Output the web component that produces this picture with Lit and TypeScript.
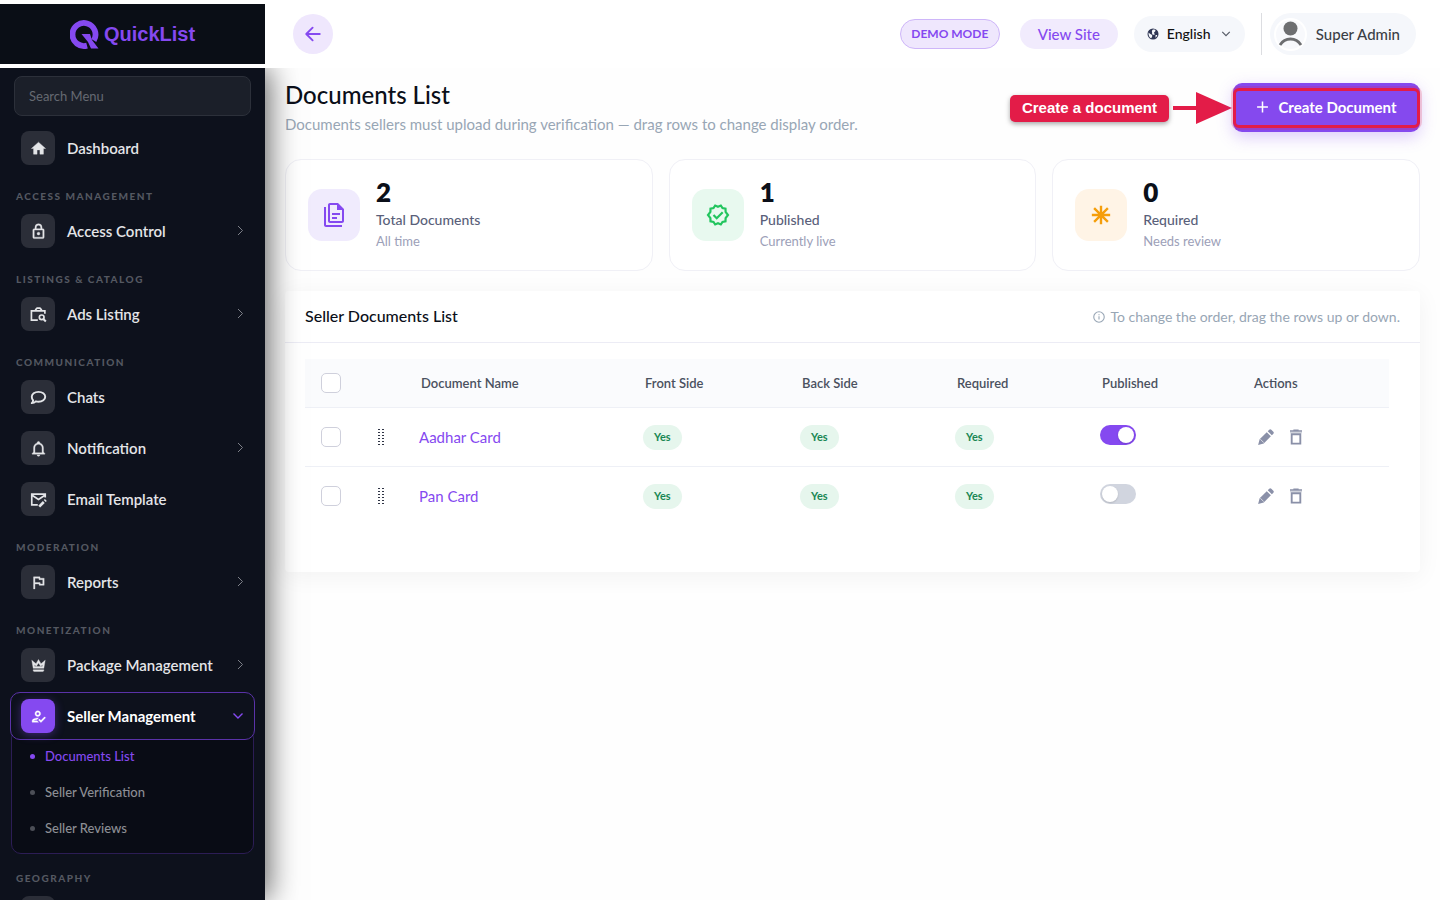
import { LitElement, html, svg, css, nothing } from "lit";
import { customElement, state } from "lit/decorators.js";
import { classMap } from "lit/directives/class-map.js";

const ICONS = {
  home: svg`<path fill="currentColor" d="M10 20v-6h4v6h5v-8h3L12 3 2 12h3v8z"/>`,
  lock: svg`<path fill="currentColor" d="M12,17C10.89,17 10,16.1 10,15C10,13.89 10.89,13 12,13A2,2 0 0,1 14,15A2,2 0 0,1 12,17M18,20V10H6V20H18M18,8A2,2 0 0,1 20,10V20A2,2 0 0,1 18,22H6C4.89,22 4,21.1 4,20V10C4,8.89 4.89,8 6,8H7V6A5,5 0 0,1 12,1A5,5 0 0,1 17,6V8H18M12,3A3,3 0 0,0 9,6V8H15V6A3,3 0 0,0 12,3Z"/>`,
  briefcase: svg`<g fill="none" stroke="currentColor" stroke-width="2.400"><path d="M11 20H2V7h19v4M8 7V5l2-2h4l2 2v2"/><circle cx="16.500" cy="16" r="3.300"/><path stroke-width="2.800" d="M18.800 18.300l3.600 3.600"/></g>`,
  chat: svg`<path fill="none" stroke="currentColor" stroke-width="2.700" stroke-linejoin="round" d="M12 4c5.500 0 9.500 3.100 9.500 7s-4 7-9.500 7c-1.300 0-2.600-.2-3.700-.6C6.600 19.200 4.900 20 2.500 20c1.300-1.300 1.900-2.600 2-3.800C3.200 14.900 2.500 13 2.500 11c0-3.900 4-7 9.500-7z"/>`,
  bell: svg`<path fill="currentColor" d="M10 21H14C14 22.100 13.100 23 12 23S10 22.100 10 21M21 19V20H3V19L5 17V11C5 7.900 7 5.200 10 4.300V4C10 2.900 10.900 2 12 2S14 2.900 14 4V4.300C17 5.200 19 7.900 19 11V17L21 19M17 11C17 8.200 14.800 6 12 6S7 8.200 7 11V18H17V11Z"/>`,
  mail: svg`<g fill="none" stroke="currentColor" stroke-width="2.400"><path d="M11 19.500H2.500V4.500h19V9M3 6l9 6 9-6"/><path stroke-width="3.800" d="M13 22l6.500-6.500M20.800 14.200l1.600-1.600"/></g>`,
  flag: svg`<path fill="currentColor" d="M12.360 6l.4 2H18v6h-3.360l-.4-2H7V6h5.360M14 4H5v17h2v-7h5.600l.4 2h7V6h-5.600L14 4z"/>`,
  crown: svg`<path fill="currentColor" d="M12 8.500L15 13.200L18 11L17.300 13.500H6.700L6 11L9 13.200L12 8.500M12 3.500L8.500 9.500L2.500 4.500L4.500 16H19.500L21.500 4.500L15.500 9.500L12 3.500M19.500 18H4.500V19C4.500 19.600 5.400 20.500 6 20.500H18C18.600 20.500 19.500 19.600 19.500 19V18Z"/>`,
  seller: svg`<path fill="currentColor" d="M11 12c2.210 0 4-1.790 4-4s-1.790-4-4-4-4 1.790-4 4 1.790 4 4 4zm0-6c1.100 0 2 .9 2 2s-.9 2-2 2-2-.9-2-2 .9-2 2-2zM5 18c.2-.63 2.570-1.680 4.960-1.940l2.040-2c-.39-.04-.68-.06-1-.06-2.670 0-8 1.340-8 4v2h9l-2-2H5zm15.600-5.500l-5.130 5.170-2.070-2.080L12 17l3.470 3.500L22 13.910z"/>`,
  map: svg`<path fill="none" stroke="currentColor" stroke-width="2" d="M3 5l6-2 6 2 6-2v16l-6 2-6-2-6 2zM9 3v16M15 5v16"/>`,
  files: svg`<path fill="currentColor" d="M16 0H8C6.900 0 6 .9 6 2V18C6 19.100 6.900 20 8 20H20C21.100 20 22 19.100 22 18V6L16 0M20 18H8V2H15V7H20V18M4 4V22H20V24H4C2.900 24 2 23.100 2 22V4H4M10 10V12H18V10H10M10 14V16H15V14H10Z"/>`,
  verified: svg`<g fill="none" stroke="currentColor" stroke-width="2.200"><path d="M12 3.700l2.800-1.200 1.700 2.600 3 .6.100 3.100L22 12l-2.400 3.200-.1 3.100-3 .6-1.700 2.600L12 20.300l-2.800 1.200-1.700-2.600-3-.6-.1-3.100L2 12l2.400-3.200.1-3.100 3-.6 1.700-2.600z"/><path d="M7.500 12l3.200 3.200 6-6"/></g>`,
  asterisk: svg`<path fill="none" stroke="currentColor" stroke-width="2.600" d="M12 2v20M2 12h20M4.500 4.500l15 15M19.500 4.500l-15 15"/>`,
  pencil: svg`<path fill="currentColor" d="M1.500 22.500l2-7.500L13 5.500l5.500 5.500-9.500 9.500zM14.300 4.200l2-2q1.400-1.200 2.800 0l2.700 2.700q1.200 1.400 0 2.800l-2 2z"/><path fill="none" stroke="#fff" stroke-width=".9" d="M4.500 15l4.500 4.500"/>`,
  trash: svg`<path fill="currentColor" d="M5 22h14V7H5zM7.500 9.500h9v10h-9zM15.500 2h-7v1H4v2h16V3h-4.500z"/><path fill="currentColor" opacity=".4" d="M4 5h16v2H4z"/>`,
  arrowLeft: svg`<path fill="none" stroke="currentColor" stroke-width="2.500" stroke-linecap="round" stroke-linejoin="round" d="M21 12H3.500M11.500 3.500L3 12l8.500 8.500"/>`,
  right: svg`<path fill="none" stroke="currentColor" stroke-width="2" d="M8 2l9 9-9 9"/>`,
  down: svg`<path fill="none" stroke="currentColor" stroke-width="2.800" d="M3 7l9 9 9-9"/>`,
  plus: svg`<path fill="none" stroke="currentColor" stroke-width="2.800" d="M12 1v20M2 11h20"/>`,
  info: svg`<circle cx="12" cy="12" r="10.500" fill="none" stroke="currentColor" stroke-width="2.200"/><path stroke="currentColor" stroke-width="2.200" d="M12 10.500V17M12 6.500v2"/>`,
  globe: svg`<circle cx="12" cy="12" r="11" fill="currentColor"/><path fill="#f5f7fb" d="M12 3c3-.4 5 .8 5 2.500S14.500 8 14 9.500s2 1.500 1.500 3-3 1.500-4.500.5-.5-3.500-1-5S10 4 12 3zM3 9c1.500 1 3 2.500 4.500 3.500S11 14 10.500 16 9 20 8 20.500C5 19 2.500 15 3 9zM17 14.500c1.500-.5 3-.5 3.500.5-.6 2-2 3.500-3.500 4.300z"/>`,
};
type IconName = keyof typeof ICONS;

const icon = (name: IconName, cls: string) =>
  html`<svg class=${cls} viewBox="0 0 24 24" aria-hidden="true">${ICONS[name]}</svg>`;

interface NavItem { label: string; icon: IconName; expandable?: boolean; active?: boolean; children?: string[]; }
interface NavGroup { title?: string; items: NavItem[]; }

const NAV: NavGroup[] = [
  { items: [{ label: "Dashboard", icon: "home" }] },
  { title: "Access Management", items: [{ label: "Access Control", icon: "lock", expandable: true }] },
  { title: "Listings & Catalog", items: [{ label: "Ads Listing", icon: "briefcase", expandable: true }] },
  { title: "Communication", items: [
    { label: "Chats", icon: "chat" },
    { label: "Notification", icon: "bell", expandable: true },
    { label: "Email Template", icon: "mail" },
  ] },
  { title: "Moderation", items: [{ label: "Reports", icon: "flag", expandable: true }] },
  { title: "Monetization", items: [
    { label: "Package Management", icon: "crown", expandable: true },
    { label: "Seller Management", icon: "seller", expandable: true, active: true,
      children: ["Documents List", "Seller Verification", "Seller Reviews"] },
  ] },
  { title: "Geography", items: [{ label: "Places", icon: "map", expandable: true }] },
];

@customElement("side-nav")
export class SideNav extends LitElement {
  static styles = css`
    :host { display: block; background: #0d111c; color: #e4e5e8; padding: 8px 10px 0; }
    .search { box-sizing: border-box; display: block; width: calc(100% - 8px); height: 40px; margin: 0 4px 8px;
      padding: 0 14px; border: 1px solid #2c303a; border-radius: 8px; background: #1b1f29; color: #e4e5e8;
      font: 13px/20px Lato, sans-serif; outline: none; }
    .search::placeholder { color: #666a72; opacity: 1; }
    .menu { display: flex; flex-direction: column; gap: 3px; }
    .title { margin: 0; padding: 14px 6px 1px; font-size: 10px; line-height: 14px; font-weight: 900;
      letter-spacing: 1.5px; text-transform: uppercase; color: #545861; }
    .link { box-sizing: border-box; position: relative; z-index: 1; display: flex; align-items: center; gap: 12px; height: 48px;
      padding: 0 8px 0 10px; border: 1px solid transparent; border-radius: 10px; color: inherit; text-decoration: none;
      font-size: 15px; line-height: 20px; font-weight: 600; }
    .tile { display: grid; place-items: center; width: 34px; height: 34px; border-radius: 8px; background: #2b2e38; }
    .glyph { width: 17px; height: 17px; stroke: currentColor; stroke-width: 0.5px; }
    .label { flex: 1; }
    .chev { width: 12px; height: 12px; color: #7d8088; }
    .active { background: #0d111c; border-color: #5a32a8; color: #fff; font-weight: 700; }
    .active .tile { background: #8549f0; box-shadow: 0 2px 10px rgba(133, 73, 240, 0.4); }
    .active .chev { color: #8549f0; margin-right: 2px; }
    .sub { margin: -12px 1px 0; padding: 9px 18px 7px; list-style: none; border: 1px solid #2c1d55;
      border-radius: 10px; background: #090c15; }
    .sublink { display: flex; align-items: center; gap: 10px; height: 36px; color: #8c8e94; text-decoration: none;
      font-size: 13px; line-height: 20px; font-weight: 500; }
    .dot { width: 5px; height: 5px; border-radius: 50%; background: #4c4f57; }
    .current { color: #8549f0; }
    .current .dot { background: #8549f0; }
  `;

  render() {
    return html`
      <input class="search" type="search" placeholder="Search Menu" aria-label="Search Menu" />
      <nav class="menu" aria-label="Main">
        ${NAV.map((g) => html`
          ${g.title ? html`<h2 class="title">${g.title}</h2>` : nothing}
          ${g.items.map((i) => html`
            <div>
              <a class=${classMap({ link: true, active: !!i.active })} href="#">
                <span class="tile">${icon(i.icon, "glyph")}</span>
                <span class="label">${i.label}</span>
                ${i.expandable ? icon(i.active ? "down" : "right", "chev") : nothing}
              </a>
              ${i.children ? html`<ul class="sub">${i.children.map((c, n) => html`
                <li><a class=${classMap({ sublink: true, current: n === 0 })} href="#"><span class="dot"></span>${c}</a></li>`)}</ul>` : nothing}
            </div>`)}
        `)}
      </nav>`;
  }
}

@customElement("top-bar")
export class TopBar extends LitElement {
  static styles = css`
    :host { display: flex; align-items: center; padding: 0 24px 0 28px; background: #fff; }
    .back { display: grid; place-items: center; width: 40px; height: 40px; padding: 0; border: 0; border-radius: 50%;
      background: #efe7fd; color: #8549f0; margin-right: auto; }
    .backicon { width: 18px; height: 18px; }
    .pill { box-sizing: border-box; display: flex; align-items: center; justify-content: center; height: 30px;
      border-radius: 15px; background: #f1ebfd; color: #8549f0; text-decoration: none; line-height: 20px; }
    .demo { width: 100px; margin-right: 20px; border: 1px solid #ceb6f9; background: #efe7fd; font-size: 12px; font-weight: 700; }
    .site { width: 98px; margin-right: 16px; font-size: 15px; font-weight: 500; }
    .lang { box-sizing: border-box; display: flex; align-items: center; gap: 8px; height: 36px; padding: 0 14px 0 13px; border-radius: 18px;
      background: #f5f7fb; color: #2f3654; margin-right: 16px; }
    .globe { width: 12px; height: 12px; }
    .select { appearance: none; width: 46px; padding: 0; border: 0; background: none; color: #111; font: 500 14px/20px Lato, sans-serif; }
    .caret { width: 10px; height: 10px; color: #555b66; }
    .rule { width: 1px; height: 42px; background: #dcdde1; margin-right: 8px; }
    .user { display: flex; align-items: center; gap: 9px; height: 42px; padding: 0 16px 0 4px; border: 0; border-radius: 21px;
      background: #f5f7fb; color: #3b3f46; font: 500 15px/20px Lato, sans-serif; }
    .avatar { width: 33px; height: 33px; }
  `;

  render() {
    return html`
      <button class="back" aria-label="Back">${icon("arrowLeft", "backicon")}</button>
      <span class="pill demo">DEMO MODE</span>
      <a class="pill site" href="#">View Site</a>
      <div class="lang">
        ${icon("globe", "globe")}
        <select class="select" aria-label="Language"><option>English</option></select>
        ${icon("down", "caret")}
      </div>
      <span class="rule"></span>
      <button class="user">
        <svg class="avatar" viewBox="0 0 33 33" aria-hidden="true">
          <circle cx="16.500" cy="16.500" r="15.500" fill="#f8f9fc" stroke="#fff" stroke-width="2"/>
          <circle cx="16.500" cy="10.500" r="7" fill="#6d6e70"/>
          <path d="M6 27c5-8 16-8 21 0" fill="none" stroke="#6d6e70" stroke-width="2.800"/>
        </svg>
        Super Admin
      </button>`;
  }
}

interface Stat { value: number; label: string; note: string; icon: IconName; tone: string; }
const STATS: Stat[] = [
  { value: 2, label: "Total Documents", note: "All time", icon: "files", tone: "violet" },
  { value: 1, label: "Published", note: "Currently live", icon: "verified", tone: "green" },
  { value: 0, label: "Required", note: "Needs review", icon: "asterisk", tone: "amber" },
];

interface Doc { name: string; published: boolean; }

@customElement("documents-page")
export class DocumentsPage extends LitElement {
  @state() private docs: Doc[] = [
    { name: "Aadhar Card", published: true },
    { name: "Pan Card", published: false },
  ];

  static styles = css`
    :host { display: block; padding: 12px 20px; background: #fefefe; }
    .head { display: flex; align-items: flex-start; margin-bottom: 23px; }
    .titles { flex: 1; padding-bottom: 1px; }
    .h1 { margin: 0 0 3px; font-size: 24px; line-height: 30px; font-weight: 500; color: #0b0f19; }
    .lead { margin: 0; font-size: 15px; line-height: 22px; color: #98a6b5; }
    .callout { display: flex; align-items: center; gap: 4px; padding-top: 12px; }
    .tip { padding: 3px 12px 4px; border-radius: 5px; background: #e31c48; color: #fff; box-shadow: 0 2px 5px rgba(0, 0, 0, 0.35);
      font: bold 15px/20px "Liberation Sans", sans-serif; }
    .pointer { display: block; width: 60px; height: 32px; }
    .cta { position: relative; margin-top: 3px; }
    .create { display: flex; align-items: center; justify-content: center; gap: 9px; width: 187px; height: 49px; padding: 0 0 1px; border: 0;
      border-radius: 9px; background: #8549ee; color: #fff; box-shadow: 0 5px 16px rgba(133, 73, 240, 0.28);
      font: 700 15px/20px Lato, sans-serif; }
    .plus { width: 13px; height: 13px; }
    .frame { position: absolute; inset: 5px 0 4px; border: 3px solid #e31c48; border-radius: 6px;
      box-shadow: 0 0 0 2px rgba(227, 28, 72, 0.2); pointer-events: none; }
    .stats { display: grid; grid-template-columns: repeat(3, 1fr); gap: 16px; margin-bottom: 20px; }
    .stat { box-sizing: border-box; display: flex; align-items: center; gap: 16px; height: 112px; padding: 0 22px;
      border: 1px solid #f0f0f6; border-radius: 16px; background: #fff; }
    .tile { display: grid; place-items: center; width: 52px; height: 52px; border-radius: 14px; }
    .tileicon { width: 24px; height: 24px; }
    .violet { background: #f0ebfd; color: #8549f0; }
    .green { background: #e8f9ef; color: #22c55e; }
    .amber { background: #fff4e6; color: #f59e0b; }
    .amber .tileicon { width: 22px; height: 22px; }
    .figures { padding-bottom: 2px; }
    .value { margin-bottom: 2px; font-size: 26px; line-height: 30px; font-weight: 800; color: #0b0f19; }
    .name { font-size: 14px; line-height: 21px; font-weight: 500; color: #5a5f7a; }
    .note { font-size: 13px; line-height: 22px; color: #9ca0b8; }
    .card { border-radius: 4px; background: #fff; box-shadow: 0 4px 24px rgba(0, 0, 0, 0.05); }
    .cardhead { display: flex; align-items: center; justify-content: space-between; height: 51px; padding: 0 20px;
      border-bottom: 1px solid #ececf5; }
    .h2 { margin: 0 0 2px; font-size: 16px; line-height: 24px; font-weight: 500; color: #0b0f19; }
    .hint { display: flex; align-items: center; gap: 5px; font-size: 14px; line-height: 20px; color: #98a6b5; }
    .infoicon { width: 12px; height: 12px; }
    .body { padding: 16px 31px 46px 20px; }
    .table { width: 100%; table-layout: fixed; border-collapse: separate; border-spacing: 0; }
    .c1 { width: 52px; } .c2 { width: 46px; } .c3 { width: 224px; } .c4 { width: 157px; }
    .c5 { width: 155px; } .c6 { width: 145px; } .c7 { width: 152px; } .c8 { width: 153px; }
    .th { height: 48px; padding: 0 0 0 18px; border-bottom: 1px solid #eef0f6; background: #fafbfd; text-align: left;
      font-size: 13px; line-height: 20px; font-weight: 600; color: #4a5160; }
    .td { height: 58px; padding: 0 0 0 16px; border-bottom: 1px solid #eef0f6; font-size: 15px; line-height: 20px; }
    .row:last-child .td { border-bottom-color: transparent; }
    .tick { padding-left: 16px; }
    .check { appearance: none; display: block; box-sizing: border-box; width: 20px; height: 20px; margin: 0;
      border: 1px solid #cfd0dc; border-radius: 5px; background: #fff; }
    .grip { display: block; width: 8px; height: 16px; margin-left: 4px; color: #2f3445; }
    .doc { color: #8549f0; text-decoration: none; }
    .yes { display: inline-block; padding: 2px 11px 3px; border-radius: 13px; background: #e6f6ed; color: #198754;
      font-size: 11px; line-height: 20px; font-weight: 700; }
    .switch { appearance: none; position: relative; display: block; width: 36px; height: 20px; margin: 0 0 4px; border-radius: 10px; background: #d1d5df; }
    .switch::before { content: ""; position: absolute; top: 2px; left: 2px; width: 16px; height: 16px; border-radius: 50%;
      background: #fff; box-shadow: 0 1px 2px rgba(0, 0, 0, 0.15); }
    .switch:checked { background: #8549f0; }
    .switch:checked::before { left: 18px; }
    .actions { display: flex; gap: 12px; padding-left: 5px; }
    .act { display: grid; place-items: center; width: 18px; height: 18px; padding: 0; border: 0; background: none; color: #8a90a8; }
    .acticon { width: 18px; height: 18px; }
  `;

  private toggle(d: Doc) {
    this.docs = this.docs.map((x) => (x === d ? { ...x, published: !x.published } : x));
  }

  render() {
    const dots = [0, 1, 2, 3, 4, 5];
    return html`
      <header class="head">
        <div class="titles">
          <h1 class="h1">Documents List</h1>
          <p class="lead">Documents sellers must upload during verification — drag rows to change display order.</p>
        </div>
        <div class="callout">
          <span class="tip">Create a document</span>
          <svg class="pointer" viewBox="0 0 60 32" aria-hidden="true">
            <path fill="#e31c48" d="M0 14h23V0l36 16-36 16V18H0z"/>
          </svg>
        </div>
        <div class="cta">
          <button class="create">${icon("plus", "plus")}Create Document</button>
          <span class="frame"></span>
        </div>
      </header>
      <section class="stats">
        ${STATS.map((s) => html`
          <article class="stat">
            <span class="tile ${s.tone}">${icon(s.icon, "tileicon")}</span>
            <div class="figures">
              <div class="value">${s.value}</div>
              <div class="name">${s.label}</div>
              <div class="note">${s.note}</div>
            </div>
          </article>`)}
      </section>
      <section class="card">
        <div class="cardhead">
          <h2 class="h2">Seller Documents List</h2>
          <span class="hint">${icon("info", "infoicon")}To change the order, drag the rows up or down.</span>
        </div>
        <div class="body">
          <table class="table">
            <colgroup>
              <col class="c1" /><col class="c2" /><col class="c3" /><col class="c4" />
              <col class="c5" /><col class="c6" /><col class="c7" /><col class="c8" />
            </colgroup>
            <thead>
              <tr>
                <th class="th tick"><input class="check" type="checkbox" aria-label="Select all" /></th>
                <th class="th"></th>
                <th class="th">Document Name</th>
                <th class="th">Front Side</th>
                <th class="th">Back Side</th>
                <th class="th">Required</th>
                <th class="th">Published</th>
                <th class="th">Actions</th>
              </tr>
            </thead>
            <tbody>
              ${this.docs.map((d) => html`
                <tr class="row">
                  <td class="td tick"><input class="check" type="checkbox" aria-label="Select ${d.name}" /></td>
                  <td class="td">
                    <svg class="grip" viewBox="0 0 8 16" aria-hidden="true">
                      ${dots.map((n) => svg`<path fill="currentColor" d="M1 ${n * 3}h2v1H1zM5 ${n * 3}h2v1H5z"/>`)}
                    </svg>
                  </td>
                  <td class="td"><a class="doc" href="#">${d.name}</a></td>
                  <td class="td"><span class="yes">Yes</span></td>
                  <td class="td"><span class="yes">Yes</span></td>
                  <td class="td"><span class="yes">Yes</span></td>
                  <td class="td">
                    <input class="switch" type="checkbox" role="switch" aria-label="Publish ${d.name}"
                      .checked=${d.published} @change=${() => this.toggle(d)} />
                  </td>
                  <td class="td">
                    <div class="actions">
                      <button class="act" aria-label="Edit ${d.name}">${icon("pencil", "acticon")}</button>
                      <button class="act" aria-label="Delete ${d.name}">${icon("trash", "acticon")}</button>
                    </div>
                  </td>
                </tr>`)}
            </tbody>
          </table>
        </div>
      </section>`;
  }
}

@customElement("app-root")
export class AppRoot extends LitElement {
  static styles = css`
    :host { display: grid; grid-template-columns: 265px 1fr; grid-template-rows: 68px 1fr; height: 100vh; overflow: hidden;
      background: #fefefe; font-family: Lato, sans-serif; }
    .brand { position: relative; z-index: 2; display: flex; align-items: center; justify-content: center; gap: 5px;
      border: solid #fff; border-width: 4px 0; background: #0a0e16; color: #8549f0; text-decoration: none; }
    .mark { width: 29px; height: 29px; }
    .word { font: bold 20px/24px "Liberation Sans", sans-serif; }
    .top { position: relative; z-index: 2; }
    .side { position: relative; z-index: 1; min-height: 0; overflow: hidden; box-shadow: 4px 0 28px rgba(0, 0, 0, 0.6); }
    .page { min-width: 0; min-height: 0; }
  `;

  render() {
    return html`
      <a class="brand" href="#">
        <svg class="mark" viewBox="0 0 29 29" aria-hidden="true">
          <path fill="none" stroke="currentColor" stroke-width="5.800" d="M17 25.600A11.500 11.500 0 1 1 23.800 20.500"/>
          <path fill="currentColor" d="M11.500 14h8.500l2 6 6.500 8.500h-7.500l-3-6.500z"/>
        </svg>
        <span class="word">QuickList</span>
      </a>
      <top-bar class="top"></top-bar>
      <side-nav class="side"></side-nav>
      <documents-page class="page"></documents-page>`;
  }
}
